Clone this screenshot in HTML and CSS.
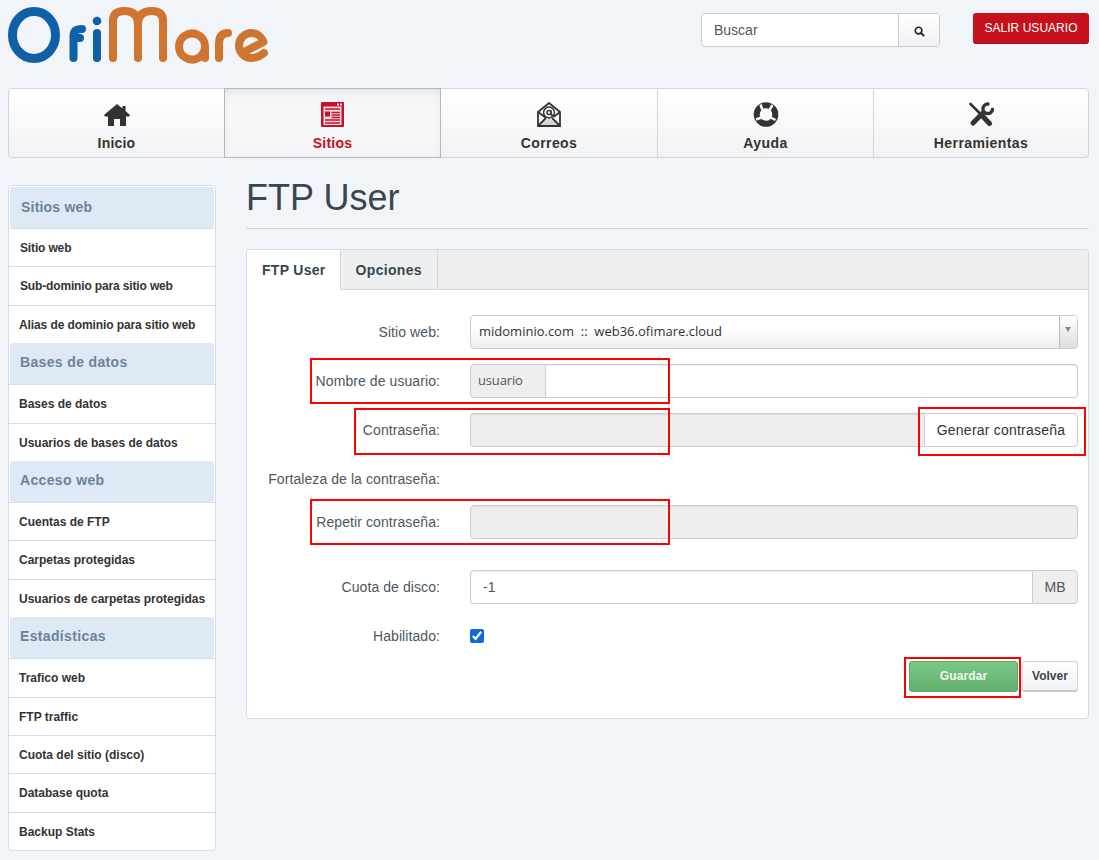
FILE: index.html
```html
<!DOCTYPE html>
<html lang="es">
<head>
<meta charset="utf-8">
<title>FTP User</title>
<link rel="stylesheet" href="styles.css">
</head>
<body>
<header class="top">
  <svg class="logo" width="270" height="70" viewBox="8 0 270 70" role="img" aria-label="OfiMare">
    <g fill="none" stroke-width="8" stroke-linecap="round" stroke-linejoin="round">
      <g stroke="#1060a8">
        <ellipse cx="34" cy="35" rx="21.500" ry="23.500" stroke-width="9"/>
        <path d="M73.500 58V36Q73.500 29 82 29M73.500 38H80"/>
        <path d="M97 33V58"/>
      </g>
      <circle cx="97" cy="21" r="4.300" fill="#1060a8" stroke="none"/>
      <g stroke="#d07530">
        <path d="M113 58V21Q113 11 124 11Q138 11 138 24V58M138 24Q138 11 152 11Q163 11 163 21V58"/>
        <path d="M205 46A13 13 0 1 0 205 47V58"/>
        <path d="M219 58V44Q219 33 228 33"/>
        <path d="M244 52L263.500 42A13 13 0 0 0 251.500 33A12.500 12.500 0 0 0 251.500 58Q258 58 264 53"/>
      </g>
    </g>
  </svg>
  <div class="search">
    <span class="search-text">Buscar</span>
    <span class="search-btn">
      <svg width="11" height="11" viewBox="0 0 12 12"><circle cx="5" cy="5" r="3.600" fill="none" stroke="#222" stroke-width="1.800"/><path d="M7.800 7.800L11 11" stroke="#222" stroke-width="2.200"/></svg>
    </span>
  </div>
  <a class="logout">SALIR USUARIO</a>
</header>

<nav class="mainnav">
  <a class="nav-item tight">
    <svg width="28" height="25" viewBox="0 0 28 25"><path fill="#333" d="M14 2L1 13 2 14.500H5V24H11V17H17V24H23V14.500H26L27 13 22.500 9V4H19.500V6.500Z"/></svg>
    <span>Inicio</span>
  </a>
  <a class="nav-item active tight">
    <svg width="23" height="25" viewBox="0 0 23 25"><rect width="23" height="25" rx="1" fill="#c8102e"/><rect x="2.500" y="4.500" width="18" height="18.500" fill="#f4d9dc"/><path fill="#f4d9dc" d="M16 1.500h2v2h-2zM19 1.500h2v2h-2z"/><path d="M4 7H19M10.500 10.500H19M10.500 13H19M10.500 15.500H19M4 18H19M4 21H19" stroke="#c8102e" stroke-width="1.300"/><rect x="4" y="9.500" width="5" height="5" fill="#c8102e"/></svg>
    <span>Sitios</span>
  </a>
  <a class="nav-item">
    <svg width="24" height="25" viewBox="0 0 24 25"><path fill="#d4d5d7" d="M2 24L12 16 22 24Z"/><g fill="none" stroke="#333" stroke-width="1.800"><path d="M1 10L12 1 23 10V24H1Z"/><path d="M1 24L9 16M23 24L15 16M1 10L8.500 15.500M23 10L16.500 15"/><circle cx="12" cy="10.500" r="5.400" stroke-width="1.500"/><circle cx="12" cy="10.500" r="2" stroke-width="1.500"/><path d="M14 8.500V12Q14 14 16.500 13" stroke-width="1.500"/></g></svg>
    <span>Correos</span>
  </a>
  <a class="nav-item">
    <svg width="26" height="25" viewBox="0 0 26 25"><circle cx="13" cy="12.500" r="9.300" fill="none" stroke="#333" stroke-width="6"/><g stroke="#f6f7f8" stroke-width="2.500"><path d="M7.500 2.500L9.500 8M19.500 3L16.500 8M3 17.500L8.500 15.500M22.500 18L17.500 15.500"/></g></svg>
    <span>Ayuda</span>
  </a>
  <a class="nav-item">
    <svg width="26" height="25" viewBox="0 0 26 25"><g fill="none" stroke="#333" stroke-linecap="round"><path d="M5 21L15.500 10.500" stroke-width="5"/><path d="M20 2A4.800 4.800 0 1 0 24.500 7.500" stroke-width="3.400"/><path d="M2.500 2L12 11.500" stroke-width="2.600"/><path d="M13.500 13L21.500 21.500" stroke-width="5"/></g></svg>
    <span>Herramientas</span>
  </a>
</nav>

<div class="layout">
  <aside class="sidebar">
    <h3 class="side-head first">Sitios web</h3>
    <a class="side-item indent">Sitio web</a>
    <a class="side-item indent">Sub-dominio para sitio web</a>
    <a class="side-item narrow">Alias de dominio para sitio web</a>
    <h3 class="side-head">Bases de datos</h3>
    <a class="side-item">Bases de datos</a>
    <a class="side-item">Usuarios de bases de datos</a>
    <h3 class="side-head">Acceso web</h3>
    <a class="side-item">Cuentas de FTP</a>
    <a class="side-item">Carpetas protegidas</a>
    <a class="side-item">Usuarios de carpetas protegidas</a>
    <h3 class="side-head">Estadísticas</h3>
    <a class="side-item">Trafico web</a>
    <a class="side-item">FTP traffic</a>
    <a class="side-item">Cuota del sitio (disco)</a>
    <a class="side-item">Database quota</a>
    <a class="side-item">Backup Stats</a>
  </aside>

  <main class="content">
    <h1 class="title">FTP User</h1>
    <section class="panel">
      <div class="tabs">
        <a class="tab active">FTP User</a>
        <a class="tab">Opciones</a>
      </div>
      <form class="form">
        <div class="row">
          <label class="lbl">Sitio web:</label>
          <div class="select"><span class="select-text">midominio.com&nbsp; ::&nbsp; web36.ofimare.cloud</span><span class="select-arrow"></span></div>
        </div>
        <div class="row">
          <label class="lbl">Nombre de usuario:</label>
          <div class="group"><span class="addon prefix">usuario</span><span class="field"></span></div>
        </div>
        <div class="row">
          <label class="lbl">Contraseña:</label>
          <div class="group"><span class="field disabled"></span><span class="gen-btn">Generar contraseña</span></div>
        </div>
        <div class="row short">
          <label class="lbl">Fortaleza de la contraseña:</label>
        </div>
        <div class="row spaced">
          <label class="lbl">Repetir contraseña:</label>
          <div class="group"><span class="field disabled solo"></span></div>
        </div>
        <div class="row">
          <label class="lbl">Cuota de disco:</label>
          <div class="group"><span class="field value">-1</span><span class="addon suffix">MB</span></div>
        </div>
        <div class="row check-row">
          <label class="lbl">Habilitado:</label>
          <input class="check" type="checkbox" checked>
        </div>
        <div class="actions">
          <span class="btn save">Guardar</span>
          <span class="btn back">Volver</span>
        </div>
      </form>
      <i class="mark m-user"></i>
      <i class="mark m-pass"></i>
      <i class="mark m-gen"></i>
      <i class="mark m-rep"></i>
      <i class="mark m-save"></i>
    </section>
  </main>
</div>
</body>
</html>
```

FILE: styles.css
```css
* { box-sizing: border-box; }
html, body { margin: 0; }
body {
  padding: 0 10px 0 8px;
  height: 860px;
  overflow: hidden;
  background: #f1f4f8;
  font-family: "Liberation Sans", Arial, sans-serif;
  color: #333;
}

.top { display: flex; align-items: flex-start; height: 88px; }
.logo { display: block; flex: none; }
.search {
  display: flex;
  width: 239px;
  height: 34px;
  margin: 13px 0 0 423px;
  background: #fff;
  border: 1px solid #ccc;
  border-radius: 4px;
}
.search-text { flex: 1; padding: 8px 12px; font-size: 14px; line-height: 16px; color: #555; }
.search-btn {
  width: 41px;
  display: flex;
  align-items: center;
  justify-content: center;
  padding-top: 2px;
  border-left: 1px solid #ccc;
  border-radius: 0 3px 3px 0;
  background: linear-gradient(#fff, #eef0f3);
}
.logout {
  width: 116px;
  height: 31px;
  margin: 13px 0 0 33px;
  background: #c8101c;
  border-bottom: 1px solid #a90d17;
  border-radius: 3px;
  color: #fff;
  font-size: 12px;
  letter-spacing: .03px;
  line-height: 30px;
  text-align: center;
}

.mainnav {
  display: grid;
  grid-template-columns: 215px 217px 216px 216px 215px;
  height: 70px;
  background: linear-gradient(#fff, #f1f2f4);
  border: 1px solid #d3d5d8;
  border-radius: 4px;
}
.nav-item {
  display: flex;
  flex-direction: column;
  align-items: center;
  justify-content: flex-end;
  gap: 8px;
  padding-bottom: 6px;
  border-left: 1px solid #d3d5d8;
  font-size: 14px;
  font-weight: 700;
  letter-spacing: .4px;
  line-height: 16px;
  color: #333;
}
.nav-item.tight { letter-spacing: .2px; }
.nav-item:first-child { border-left: 0; }
.nav-item svg { display: block; }
.nav-item.active {
  margin: -1px 0;
  color: #c8101c;
  border: 1px solid #b5b7ba;
  background: linear-gradient(#f0f1f3, #f7f8f9 30%, #f4f5f7);
  box-shadow: inset 0 2px 6px rgba(0,0,0,.06);
}
.nav-item.active + .nav-item { border-left: 0; }

.layout { display: flex; align-items: flex-start; margin-top: 27px; }
.sidebar {
  flex: none;
  width: 208px;
  height: 666px;
  background: #fff;
  border: 1px solid #cfdff0;
  border-radius: 4px;
  display: flex;
  flex-direction: column;
}
.side-head {
  flex: none;
  height: 41px;
  padding: 0 10px;
  background: #dfe8f5;
  border-radius: 2px;
  margin: 0 1px;
  font-size: 14px;
  font-weight: 700;
  letter-spacing: .35px;
  line-height: 39px;
  color: #6d8299;
}
.side-head.first { margin-top: 1px; padding-left: 11px; letter-spacing: .2px; line-height: 40px; }
.side-item {
  flex: none;
  height: 38.400px;
  padding-left: 10px;
  border-top: 1px solid #cfdff0;
  font-size: 12px;
  font-weight: 700;
  line-height: 38px;
  color: #333;
}
.side-item.indent { padding-left: 11px; letter-spacing: -.15px; }
.side-item.narrow { letter-spacing: -.1px; }

.content { flex: 1; min-width: 0; margin-left: 30px; }
.title {
  margin: 0;
  height: 44px;
  border-bottom: 1px solid #d3d5d8;
  font-size: 36px;
  font-weight: 400;
  letter-spacing: .03px;
  line-height: 25px;
  color: #37474f;
}
.panel {
  position: relative;
  margin-top: 20px;
  height: 470px;
  background: #fff;
  border: 1px solid #d6d8db;
  border-radius: 4px;
}
.tabs {
  display: flex;
  height: 40px;
  background: #eeeff1;
  border-bottom: 1px solid #d6d8db;
  border-radius: 4px 4px 0 0;
}
.tab {
  padding: 0 15px;
  border-right: 1px solid #d6d8db;
  font-size: 14px;
  font-weight: 700;
  letter-spacing: .3px;
  line-height: 41px;
  color: #37474f;
}
.tab.active { height: 40px; padding-right: 14px; background: #fff; border-radius: 4px 0 0 0; }

.form { padding: 25px 10px 0 0; }
.row { display: flex; align-items: center; margin-bottom: 15px; }
.row.short { height: 28px; }
.row.short .lbl { padding-top: 6px; }
.row.spaced { margin-bottom: 31px; }
.row.check-row { height: 34px; margin-bottom: 8px; }
.lbl {
  flex: none;
  width: 193px;
  margin-right: 30px;
  text-align: right;
  font-size: 14px;
  letter-spacing: .08px;
  color: #4d5761;
}
.select {
  flex: 1;
  display: flex;
  height: 34px;
  background: linear-gradient(#fff 40%, #ececec);
  border: 1px solid #ccc;
  border-radius: 4px;
}
.select-text {
  flex: 1;
  padding-left: 8px;
  font-family: "Open Sans", sans-serif;
  font-size: 13px;
  line-height: 30px;
  color: #333;
}
.select-arrow {
  width: 18px;
  position: relative;
  border-left: 1px solid #bbb;
  background: linear-gradient(#fff, #ddd);
  border-radius: 0 3px 3px 0;
}
.select-arrow::after {
  content: "";
  position: absolute;
  left: 5px;
  top: 11px;
  border: 3.500px solid transparent;
  border-top: 5px solid #888;
  border-bottom: 0;
}
.group { flex: 1; display: flex; height: 34px; }
.addon {
  background: #eee;
  border: 1px solid #ccc;
  font-size: 14px;
  line-height: 32px;
  color: #555;
}
.prefix {
  width: 76px;
  padding-left: 7px;
  border-radius: 4px 0 0 4px;
  font-family: "Open Sans", sans-serif;
  font-size: 13px;
  letter-spacing: -.15px;
  line-height: 30px;
}
.suffix { width: 46px; text-align: center; border-radius: 0 4px 4px 0; }
.field {
  flex: 1;
  background: #fff;
  border: 1px solid #ccc;
  border-left: 0;
  border-radius: 0 4px 4px 0;
  box-shadow: inset 0 1px 1px rgba(0,0,0,.075);
}
.field.disabled { background: #eee; border-left: 1px solid #ccc; border-right: 0; border-radius: 4px 0 0 4px; }
.field.disabled.solo { border-right: 1px solid #ccc; border-radius: 4px; }
.field.value {
  padding-left: 12px;
  border-left: 1px solid #ccc;
  border-right: 0;
  border-radius: 4px 0 0 4px;
  font-size: 14px;
  line-height: 32px;
  color: #555;
}
.gen-btn {
  width: 154px;
  background: #fff;
  border: 1px solid #ccc;
  border-radius: 0 4px 4px 0;
  font-size: 14px;
  letter-spacing: .22px;
  line-height: 32px;
  text-align: center;
  color: #333;
}
.check { width: 14px; height: 14px; margin: 0; accent-color: #0b6bdc; }

.actions { display: flex; justify-content: flex-end; gap: 4px; }
.btn {
  height: 31px;
  border-radius: 3px;
  font-size: 12px;
  font-weight: 700;
  line-height: 29px;
  text-align: center;
}
.save {
  width: 109px;
  background: linear-gradient(#7dc786, #62b06d);
  border: 1px solid #5aa866;
  color: #eefaf0;
  letter-spacing: .1px;
}
.back {
  width: 56px;
  background: linear-gradient(#fff, #f0f1f3);
  border: 1px solid #d3d5d8;
  border-bottom: 2px solid #c6c8cb;
  color: #37474f;
}

.mark { position: absolute; border: 2px solid #f00; }
.m-user { left: 63px; top: 108px; width: 360px; height: 46px; }
.m-pass { left: 107px; top: 158px; width: 316px; height: 47px; }
.m-gen { left: 671px; top: 157px; width: 168px; height: 49px; }
.m-rep { left: 63px; top: 249px; width: 360px; height: 46px; }
.m-save { left: 657px; top: 407px; width: 117px; height: 41px; }
```
